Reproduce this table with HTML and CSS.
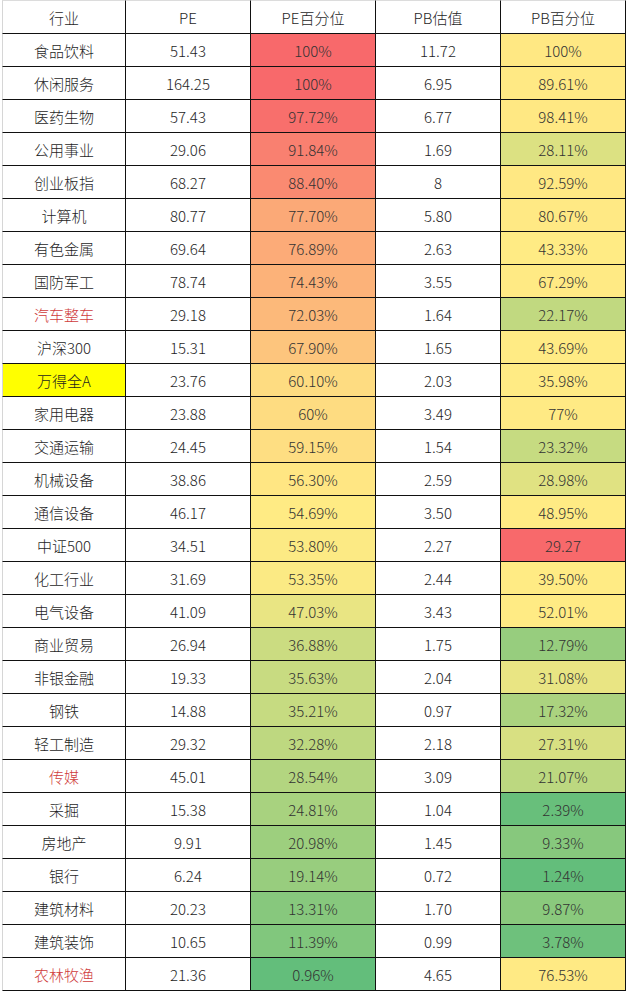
FILE: index.html
```html
<!DOCTYPE html>
<html lang="zh-CN">
<head>
<meta charset="utf-8">
<title>行业估值</title>
<link rel="stylesheet" href="styles.css">
</head>
<body>
<div class="sheet">
  <div class="row head">
    <div class="c first">行业</div><div class="c">PE</div><div class="c">PE百分位</div><div class="c">PB估值</div><div class="c">PB百分位</div>
  </div>
  <div class="row"><div class="c first">食品饮料</div><div class="c">51.43</div><div class="c p" style="background:rgb(248,105,107)">100%</div><div class="c">11.72</div><div class="c p" style="background:rgb(255,232,131)">100%</div></div>
  <div class="row"><div class="c first">休闲服务</div><div class="c">164.25</div><div class="c p" style="background:rgb(248,105,107)">100%</div><div class="c">6.95</div><div class="c p" style="background:rgb(255,233,132)">89.61%</div></div>
  <div class="row"><div class="c first">医药生物</div><div class="c">57.43</div><div class="c p" style="background:rgb(248,111,108)">97.72%</div><div class="c">6.77</div><div class="c p" style="background:rgb(255,232,131)">98.41%</div></div>
  <div class="row"><div class="c first">公用事业</div><div class="c">29.06</div><div class="c p" style="background:rgb(249,128,112)">91.84%</div><div class="c">1.69</div><div class="c p" style="background:rgb(220,225,130)">28.11%</div></div>
  <div class="row"><div class="c first">创业板指</div><div class="c">68.27</div><div class="c p" style="background:rgb(250,138,113)">88.40%</div><div class="c">8</div><div class="c p" style="background:rgb(255,232,131)">92.59%</div></div>
  <div class="row"><div class="c first">计算机</div><div class="c">80.77</div><div class="c p" style="background:rgb(251,169,119)">77.70%</div><div class="c">5.80</div><div class="c p" style="background:rgb(255,233,132)">80.67%</div></div>
  <div class="row"><div class="c first">有色金属</div><div class="c">69.64</div><div class="c p" style="background:rgb(252,171,120)">76.89%</div><div class="c">2.63</div><div class="c p" style="background:rgb(255,235,132)">43.33%</div></div>
  <div class="row"><div class="c first">国防军工</div><div class="c">78.74</div><div class="c p" style="background:rgb(252,178,121)">74.43%</div><div class="c">3.55</div><div class="c p" style="background:rgb(255,234,132)">67.29%</div></div>
  <div class="row"><div class="c first red">汽车整车</div><div class="c">29.18</div><div class="c p" style="background:rgb(252,185,122)">72.03%</div><div class="c">1.64</div><div class="c p" style="background:rgb(193,217,128)">22.17%</div></div>
  <div class="row"><div class="c first">沪深300</div><div class="c">15.31</div><div class="c p" style="background:rgb(253,197,125)">67.90%</div><div class="c">1.65</div><div class="c p" style="background:rgb(255,235,132)">43.69%</div></div>
  <div class="row"><div class="c first hl">万得全A</div><div class="c">23.76</div><div class="c p" style="background:rgb(254,220,129)">60.10%</div><div class="c">2.03</div><div class="c p" style="background:rgb(255,235,132)">35.98%</div></div>
  <div class="row"><div class="c first">家用电器</div><div class="c">23.88</div><div class="c p" style="background:rgb(254,220,129)">60%</div><div class="c">3.49</div><div class="c p" style="background:rgb(255,234,132)">77%</div></div>
  <div class="row"><div class="c first">交通运输</div><div class="c">24.45</div><div class="c p" style="background:rgb(254,222,130)">59.15%</div><div class="c">1.54</div><div class="c p" style="background:rgb(198,219,129)">23.32%</div></div>
  <div class="row"><div class="c first">机械设备</div><div class="c">38.86</div><div class="c p" style="background:rgb(255,230,131)">56.30%</div><div class="c">2.59</div><div class="c p" style="background:rgb(224,226,130)">28.98%</div></div>
  <div class="row"><div class="c first">通信设备</div><div class="c">46.17</div><div class="c p" style="background:rgb(255,235,132)">54.69%</div><div class="c">3.50</div><div class="c p" style="background:rgb(255,235,132)">48.95%</div></div>
  <div class="row"><div class="c first">中证500</div><div class="c">34.51</div><div class="c p" style="background:rgb(252,234,132)">53.80%</div><div class="c">2.27</div><div class="c p" style="background:rgb(248,105,107)">29.27</div></div>
  <div class="row"><div class="c first">化工行业</div><div class="c">31.69</div><div class="c p" style="background:rgb(251,234,132)">53.35%</div><div class="c">2.44</div><div class="c p" style="background:rgb(255,235,132)">39.50%</div></div>
  <div class="row"><div class="c first">电气设备</div><div class="c">41.09</div><div class="c p" style="background:rgb(233,229,131)">47.03%</div><div class="c">3.43</div><div class="c p" style="background:rgb(255,235,132)">52.01%</div></div>
  <div class="row"><div class="c first">商业贸易</div><div class="c">26.94</div><div class="c p" style="background:rgb(203,220,129)">36.88%</div><div class="c">1.75</div><div class="c p" style="background:rgb(151,205,126)">12.79%</div></div>
  <div class="row"><div class="c first">非银金融</div><div class="c">19.33</div><div class="c p" style="background:rgb(200,219,129)">35.63%</div><div class="c">2.04</div><div class="c p" style="background:rgb(233,229,131)">31.08%</div></div>
  <div class="row"><div class="c first">钢铁</div><div class="c">14.88</div><div class="c p" style="background:rgb(198,219,129)">35.21%</div><div class="c">0.97</div><div class="c p" style="background:rgb(171,211,127)">17.32%</div></div>
  <div class="row"><div class="c first">轻工制造</div><div class="c">29.32</div><div class="c p" style="background:rgb(190,216,128)">32.28%</div><div class="c">2.18</div><div class="c p" style="background:rgb(216,224,130)">27.31%</div></div>
  <div class="row"><div class="c first red">传媒</div><div class="c">45.01</div><div class="c p" style="background:rgb(179,213,128)">28.54%</div><div class="c">3.09</div><div class="c p" style="background:rgb(188,216,128)">21.07%</div></div>
  <div class="row"><div class="c first">采掘</div><div class="c">15.38</div><div class="c p" style="background:rgb(168,210,127)">24.81%</div><div class="c">1.04</div><div class="c p" style="background:rgb(104,191,123)">2.39%</div></div>
  <div class="row"><div class="c first">房地产</div><div class="c">9.91</div><div class="c p" style="background:rgb(157,207,126)">20.98%</div><div class="c">1.45</div><div class="c p" style="background:rgb(135,200,125)">9.33%</div></div>
  <div class="row"><div class="c first">银行</div><div class="c">6.24</div><div class="c p" style="background:rgb(152,205,126)">19.14%</div><div class="c">0.72</div><div class="c p" style="background:rgb(99,190,123)">1.24%</div></div>
  <div class="row"><div class="c first">建筑材料</div><div class="c">20.23</div><div class="c p" style="background:rgb(135,200,125)">13.31%</div><div class="c">1.70</div><div class="c p" style="background:rgb(138,201,125)">9.87%</div></div>
  <div class="row"><div class="c first">建筑装饰</div><div class="c">10.65</div><div class="c p" style="background:rgb(129,199,125)">11.39%</div><div class="c">0.99</div><div class="c p" style="background:rgb(110,193,124)">3.78%</div></div>
  <div class="row"><div class="c first red">农林牧渔</div><div class="c">21.36</div><div class="c p" style="background:rgb(99,190,123)">0.96%</div><div class="c">4.65</div><div class="c p" style="background:rgb(255,234,132)">76.53%</div></div>
</div>
</body>
</html>
```
FILE: styles.css
```css
html, body {
  margin: 0;
  padding: 0;
  background: #ffffff;
}

body {
  font-family: "Noto Sans CJK SC", "Noto Sans", sans-serif;
  font-size: 15px;
  font-weight: 300;
  color: #1e1e1e;
}

.sheet {
  padding-left: 2px;
  width: 624px;
}

.row {
  display: grid;
  grid-template-columns: 124px 125px 125px 125px 125px;
  height: 33px;
}

.row.head {
  height: 34px;
}

.row.head .c {
  border-top: 1px solid #dcdcdc;
}

.c {
  box-sizing: border-box;
  border-right: 1px solid #111111;
  border-bottom: 1px solid #111111;
  display: flex;
  align-items: center;
  justify-content: center;
  white-space: nowrap;
  padding-top: 1px;
}

.c.first {
  border-left: 1px solid #d6d6d6;
}

.c.p {
  color: #333333;
}

.c.red {
  color: #cf3b3b;
}

.c.hl {
  background: #ffff00;
}
```
